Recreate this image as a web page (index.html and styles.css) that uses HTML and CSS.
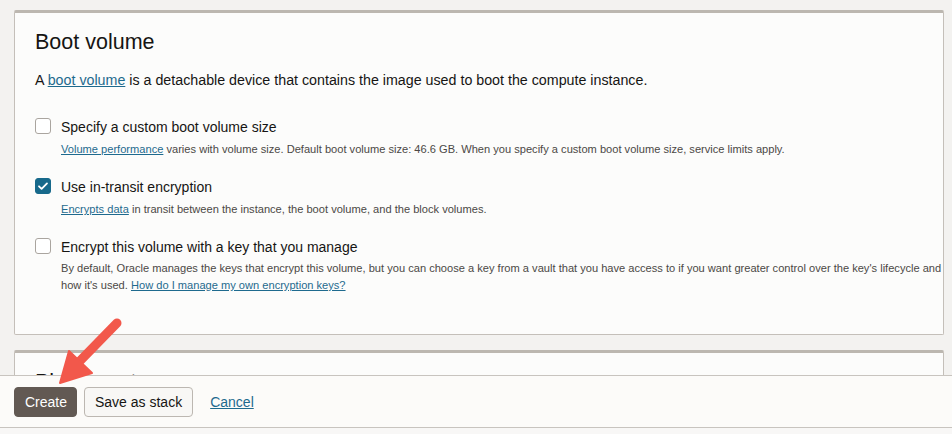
FILE: index.html
```html
<!DOCTYPE html>
<html lang="en">

<head>
    <meta charset="UTF-8">
    <meta name="viewport" content="width=device-width, initial-scale=1.0">
    <title>Create compute instance</title>
    <link rel="stylesheet" href="styles.css">
</head>

<body>
    <div class="page">
        <!-- Scrolling form content -->
        <div class="content">
            <section class="card">
                <h2>Boot volume</h2>
                <p class="intro">A <a href="#">boot volume</a> is a detachable device that contains the image used to boot the compute instance.</p>

                <div class="option">
                    <span class="checkbox"></span>
                    <div class="option-body">
                        <label>Specify a custom boot volume size</label>
                        <p class="help"><a href="#">Volume performance</a> varies with volume size. Default boot volume size: 46.6 GB. When you specify a custom boot volume size, service limits apply.</p>
                    </div>
                </div>

                <div class="option">
                    <span class="checkbox checked">
                        <svg viewBox="0 0 16 16" width="16" height="16">
                            <path d="M4 8.3l2.6 2.6L12 5.4" fill="none" stroke="#fff" stroke-width="1.8" stroke-linecap="round" stroke-linejoin="round" />
                        </svg>
                    </span>
                    <div class="option-body">
                        <label>Use in-transit encryption</label>
                        <p class="help"><a href="#">Encrypts data</a> in transit between the instance, the boot volume, and the block volumes.</p>
                    </div>
                </div>

                <div class="option">
                    <span class="checkbox"></span>
                    <div class="option-body">
                        <label>Encrypt this volume with a key that you manage</label>
                        <p class="help wide">By default, Oracle manages the keys that encrypt this volume, but you can choose a key from a vault that you have access to if you want greater control over the key's lifecycle and<br>how it's used. <a href="#">How do I manage my own encryption keys?</a></p>
                    </div>
                </div>
            </section>

            <section class="card">
                <h2>Placement</h2>
            </section>
        </div>

        <!-- Sticky action bar -->
        <div class="actions">
            <button class="btn primary">Create</button>
            <button class="btn">Save as stack</button>
            <a href="#" class="cancel">Cancel</a>
        </div>
        <div class="bottom-strip"></div>

        <!-- Annotation arrow -->
        <svg class="arrow" width="952" height="434" viewBox="0 0 952 434">
            <line x1="117" y1="323" x2="76" y2="365" stroke="#f2584b" stroke-width="9" stroke-linecap="round" />
            <polygon points="60,383 69,351 92,373" fill="#f2584b" stroke="#f2584b" stroke-width="2" stroke-linejoin="round" />
        </svg>
    </div>
</body>

</html>
```

FILE: styles.css
```css
/* Reset & Variables */
* {
    margin: 0;
    padding: 0;
    box-sizing: border-box;
}

:root {
    --text: #161513;
    --muted: #4b4845;
    --link: #1e6a8e;
    --border: #c4bfb9;
    --page: #f3f2f0;
    --surface: #fcfcfb;
}

body {
    font-family: 'Liberation Sans', Arial, sans-serif;
    color: var(--text);
    background: var(--page);
    width: 952px;
    height: 434px;
    overflow: hidden;
}

a {
    color: var(--link);
}

.page {
    position: relative;
    height: 434px;
    display: flex;
    flex-direction: column;
}

/* Form content */
.content {
    height: 375px;
    overflow: hidden;
    padding: 10px 8px 0 14px;
    display: flex;
    flex-direction: column;
    gap: 15px;
    flex-shrink: 0;
}

.card {
    background: var(--surface);
    border: 1px solid var(--border);
    border-top: 3px solid #bcb7b0;
    border-radius: 2px;
    padding: 17px 0 40px 20px;
    flex-shrink: 0;
}

.card h2 {
    font-size: 21.5px;
    line-height: 24px;
    font-weight: normal;
    margin-bottom: 16px;
}

.intro {
    font-size: 14.25px;
    line-height: 20px;
    margin-bottom: 27px;
}

.option {
    display: flex;
    gap: 10px;
    margin-bottom: 20px;
}

.option:last-child {
    margin-bottom: 0;
}

.checkbox {
    width: 16px;
    height: 16px;
    margin-top: 1px;
    border: 1px solid #aaa59f;
    border-radius: 3px;
    background: #fff;
    flex-shrink: 0;
}

.checkbox.checked {
    background: #17698b;
    border-color: #17698b;
    display: flex;
    align-items: center;
    justify-content: center;
}

.checkbox.checked svg {
    flex-shrink: 0;
}

.option-body label {
    display: block;
    font-size: 14px;
    line-height: 20px;
}

.help {
    font-size: 11.1px;
    line-height: 16px;
    color: var(--muted);
    margin-top: 4px;
}

.help.wide {
    line-height: 17px;
    margin-top: 3px;
    white-space: nowrap;
}

/* Action bar */
.actions {
    height: 53px;
    background: #fcfbf9;
    border-top: 1px solid #c8c4bf;
    border-bottom: 1px solid #c8c4bf;
    padding: 11px 0 0 14px;
    display: flex;
    align-items: flex-start;
    gap: 7px;
    flex-shrink: 0;
}

.btn {
    font-family: inherit;
    font-size: 14px;
    height: 30px;
    padding: 0 10px;
    border-radius: 4px;
    border: 1px solid #bcb7b1;
    background: #f8f7f5;
    color: var(--text);
}

.btn.primary {
    background: #625953;
    border-color: #625953;
    color: #fff;
    width: 63px;
}

.cancel {
    font-size: 14px;
    line-height: 30px;
    margin-left: 10px;
}

.bottom-strip {
    flex: 1;
    background: #f8f7f6;
}

/* Annotation */
.arrow {
    position: absolute;
    left: 0;
    top: 0;
    pointer-events: none;
}
```
